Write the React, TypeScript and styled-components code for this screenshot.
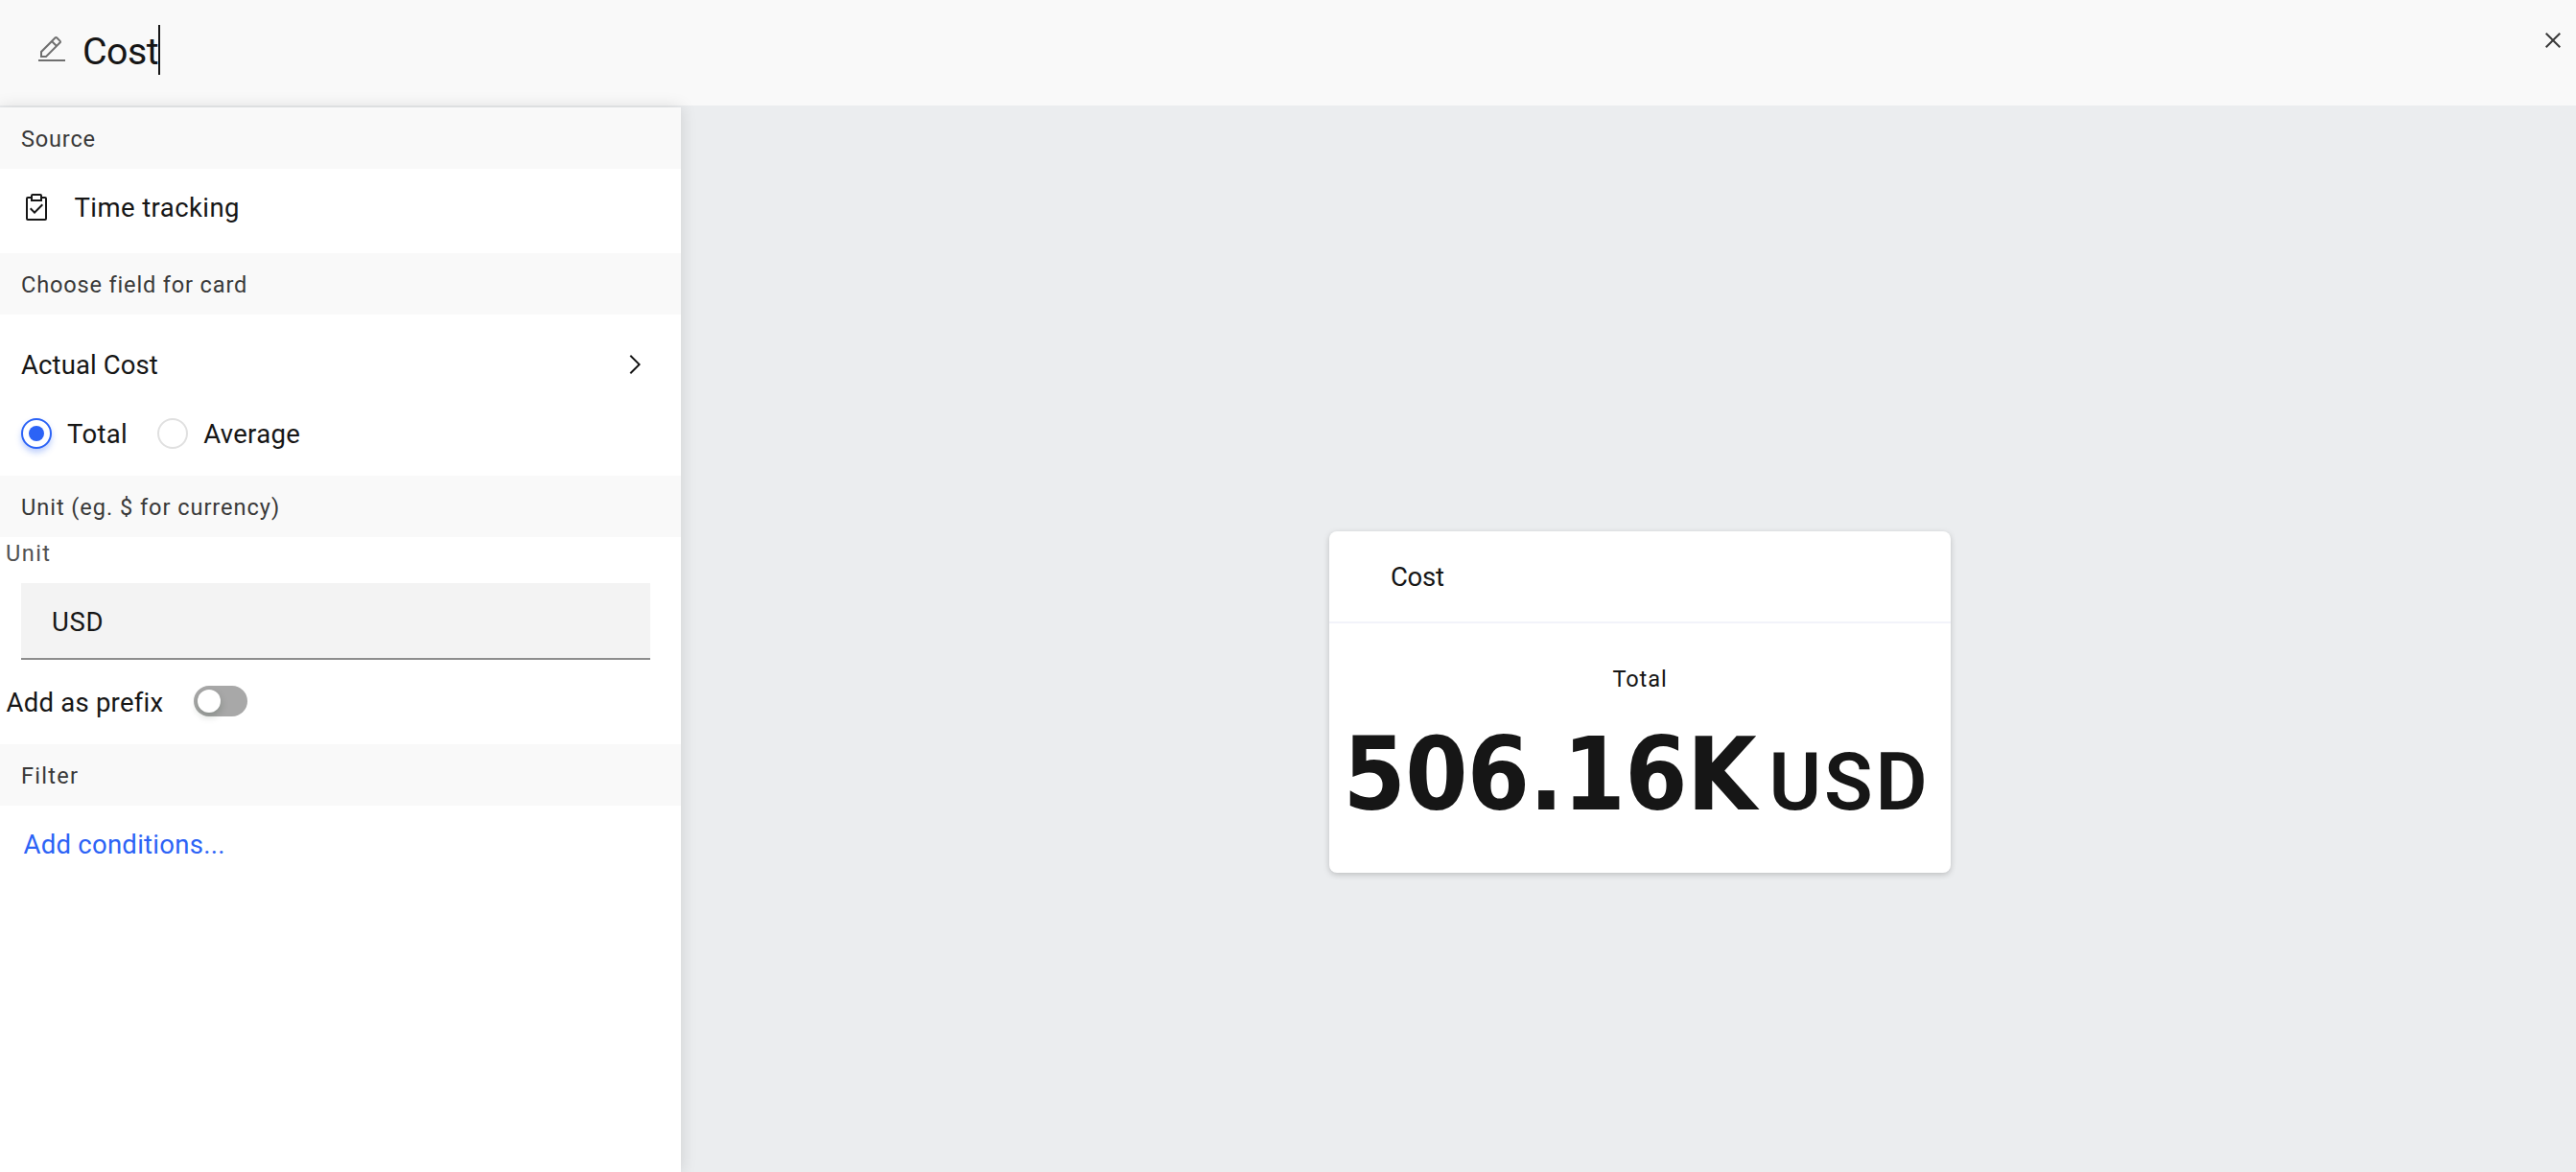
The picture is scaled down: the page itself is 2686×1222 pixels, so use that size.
import React from 'react';
import styled, { createGlobalStyle, css } from 'styled-components';

const color = {
  ink: '#161616',
  label: '#393939',
  helper: '#525252',
  accent: '#2c63f6',
  surface: '#f9f9f9',
  canvas: '#ebedef',
};

const GlobalStyle = createGlobalStyle`
  * { box-sizing: border-box; }
  body {
    margin: 0;
    background: ${color.canvas};
    color: ${color.ink};
    font-family: Roboto, "Liberation Sans", sans-serif;
    font-kerning: normal;
  }
`;

const Page = styled.div`
  display: flex;
  flex-direction: column;
  height: 1222px;
  overflow: hidden;
`;

const Header = styled.header`
  display: flex;
  flex: none;
  justify-content: space-between;
  height: 110px;
  padding: 26px 8px 0 38px;
  background: ${color.surface};
`;

const TitleField = styled.div`
  display: flex;
  align-items: flex-start;
  height: 52px;
`;

const Icon = styled.svg<{ $color?: string }>`
  display: block;
  flex: none;
  width: 32px;
  height: 32px;
  fill: ${(p) => p.$color ?? color.ink};
`;

const EditIcon = styled(Icon)`
  margin-top: 10px;
`;

const Title = styled.h1`
  margin: 1px 0 0 16px;
  font-size: 39.3px;
  font-weight: 400;
  line-height: 54px;
  letter-spacing: -0.5px;
`;

const Caret = styled.span`
  width: 2px;
  height: 52px;
  background: ${color.ink};
`;

const Main = styled.main`
  display: flex;
  flex: 1;
  min-height: 0;
`;

const Sidebar = styled.aside`
  display: flex;
  flex: none;
  flex-direction: column;
  width: 710px;
  margin-top: 2px;
  background: #fff;
  box-shadow: 0 0 16px rgba(0, 0, 0, 0.13);
`;

const SectionTitle = styled.h2<{ $spacing?: number }>`
  flex: none;
  height: 64px;
  margin: 0;
  padding: 1px 22px 0;
  background: ${color.surface};
  color: ${color.label};
  font-size: 23.6px;
  font-weight: 400;
  line-height: 64px;
  letter-spacing: ${(p) => p.$spacing ?? 0.82}px;
`;

const Text = styled.span<{ $spacing?: number }>`
  padding-top: 2px;
  font-size: 27.5px;
  line-height: 32px;
  letter-spacing: ${(p) => p.$spacing ?? 0.3}px;
  white-space: nowrap;
`;

const SourceRow = styled.div`
  display: flex;
  align-items: center;
  gap: 23.5px;
  height: 88px;
  padding: 0 22px 8px;
`;

const FieldSection = styled.div`
  display: flex;
  flex-direction: column;
  gap: 38px;
  padding: 35px 32px 27px 22px;
`;

const FieldRow = styled.div`
  display: flex;
  align-items: center;
  justify-content: space-between;
`;

const RadioGroup = styled.div`
  display: flex;
  gap: 31px;
`;

const RadioOption = styled.label`
  display: flex;
  align-items: center;
  gap: 16px;
`;

const RadioMark = styled.span<{ $checked?: boolean }>`
  display: flex;
  align-items: center;
  justify-content: center;
  width: 32px;
  height: 32px;
  border: 2px solid #e0e0e0;
  border-radius: 50%;
  background: #fff;
  ${(p) =>
    p.$checked &&
    css`
      border-color: ${color.accent};
      box-shadow: 0 4px 6px rgba(44, 99, 246, 0.3);
      &::after {
        content: '';
        width: 16px;
        height: 16px;
        border-radius: 50%;
        background: ${color.accent};
      }
    `}
`;

const UnitSection = styled.div`
  display: flex;
  flex-direction: column;
  height: 216px;
`;

const UnitLabel = styled.label`
  padding: 1px 0 0 6px;
  color: ${color.helper};
  font-size: 23.6px;
  line-height: 33px;
  letter-spacing: 1.4px;
`;

const UnitInput = styled.div`
  display: flex;
  align-items: center;
  height: 80px;
  margin: 14px 32px 26px 22px;
  padding: 1px 32px 0;
  border-bottom: 2px solid #8d8d8d;
  background: #f3f3f3;
`;

const PrefixRow = styled.div`
  display: flex;
  align-items: center;
  gap: 32px;
  padding-left: 6.5px;
`;

const PrefixText = styled(Text)`
  padding-top: 3px;
  line-height: 31px;
`;

const Toggle = styled.span`
  display: flex;
  align-items: center;
  width: 56px;
  height: 32px;
  padding: 0 4px;
  border-radius: 16px;
  background: #a8a8a8;
`;

const Knob = styled.span`
  width: 24px;
  height: 24px;
  border-radius: 50%;
  background: #fff;
  box-shadow: 0 4px 8px rgba(0, 35, 11, 0.2);
`;

const AddConditions = styled.a`
  padding: 24px 24.5px;
  color: ${color.accent};
  font-size: 27.5px;
  line-height: 33px;
  letter-spacing: 0.26px;
`;

const Preview = styled.section`
  display: flex;
  flex: 1;
  align-items: flex-start;
  justify-content: center;
  padding: 444px 0 0 24px;
`;

const Card = styled.article`
  width: 648px;
  height: 356px;
  border-radius: 8px;
  background: #fff;
  box-shadow: 0 2px 6px rgba(0, 0, 0, 0.2);
`;

const CardHeader = styled.div`
  display: flex;
  align-items: center;
  height: 96px;
  padding: 0 64px;
  border-bottom: 2px solid #f2f3fa;
`;

const Metric = styled.div`
  display: flex;
  flex-direction: column;
  align-items: center;
  padding-top: 42px;
`;

const MetricLabel = styled.span`
  font-size: 23.6px;
  line-height: 32px;
  letter-spacing: 0.9px;
`;

const MetricValue = styled.div`
  display: flex;
  align-items: baseline;
  align-self: flex-start;
  gap: 13.5px;
  margin-top: 28px;
  padding-left: 14.5px;
`;

const Amount = styled.span`
  font-family: "DejaVu Sans Condensed", "DejaVu Sans", sans-serif;
  font-size: 104.3px;
  font-stretch: condensed;
  font-weight: 700;
  line-height: 112px;
  letter-spacing: -0.6px;
`;

const Unit = styled.span`
  font-size: 83px;
  font-weight: 600;
  line-height: 96px;
  letter-spacing: 2.8px;
`;

export default function App() {
  return (
    <Page>
      <GlobalStyle />
      <Header>
        <TitleField>
          <EditIcon viewBox="0 0 32 32" $color="#6f6f6f">
            <path d="M2 26h28v2H2zM25.4 9c.8-.8.8-2 0-2.8l-3.6-3.6c-.8-.8-2-.8-2.8 0l-15 15V24h6.4l15-15zm-5-5L24 7.6l-3 3L17.4 7l3-3zM6 22v-3.6l10-10 3.6 3.6-10 10H6z" />
          </EditIcon>
          <Title>Cost</Title>
          <Caret />
        </TitleField>
        <Icon viewBox="0 0 32 32" $color={color.label}>
          <path d="M24 9.4 22.6 8 16 14.6 9.4 8 8 9.4l6.6 6.6L8 22.6 9.4 24l6.6-6.6 6.6 6.6 1.4-1.4-6.6-6.6L24 9.4z" />
        </Icon>
      </Header>
      <Main>
        <Sidebar>
          <SectionTitle $spacing={0.8}>Source</SectionTitle>
          <SourceRow>
            <Icon viewBox="0 0 32 32">
              <path d="M14 20.18 10.41 16.59 9 18l5 5 9-9-1.41-1.42L14 20.18z" />
              <path d="M25 5h-3V4a2 2 0 0 0-2-2h-8a2 2 0 0 0-2 2v1H7a2 2 0 0 0-2 2v21a2 2 0 0 0 2 2h18a2 2 0 0 0 2-2V7a2 2 0 0 0-2-2zM12 4h8v4h-8V4zm13 24H7V7h3v3h12V7h3v21z" />
            </Icon>
            <Text $spacing={0.41}>Time tracking</Text>
          </SourceRow>
          <SectionTitle>Choose field for card</SectionTitle>
          <FieldSection>
            <FieldRow>
              <Text $spacing={0.1}>Actual Cost</Text>
              <Icon viewBox="0 0 32 32">
                <path d="M22 16 12 26l-1.4-1.4 8.6-8.6-8.6-8.6L12 6l10 10z" />
              </Icon>
            </FieldRow>
            <RadioGroup>
              <RadioOption>
                <RadioMark $checked />
                <Text $spacing={0.35}>Total</Text>
              </RadioOption>
              <RadioOption>
                <RadioMark />
                <Text>Average</Text>
              </RadioOption>
            </RadioGroup>
          </FieldSection>
          <SectionTitle $spacing={0.94}>Unit (eg. $ for currency)</SectionTitle>
          <UnitSection>
            <UnitLabel>Unit</UnitLabel>
            <UnitInput>
              <Text $spacing={0.67}>USD</Text>
            </UnitInput>
            <PrefixRow>
              <PrefixText $spacing={0.24}>Add as prefix</PrefixText>
              <Toggle>
                <Knob />
              </Toggle>
            </PrefixRow>
          </UnitSection>
          <SectionTitle $spacing={1.25}>Filter</SectionTitle>
          <AddConditions>Add conditions...</AddConditions>
        </Sidebar>
        <Preview>
          <Card>
            <CardHeader>
              <Text $spacing={-0.3}>Cost</Text>
            </CardHeader>
            <Metric>
              <MetricLabel>Total</MetricLabel>
              <MetricValue>
                <Amount>506.16K</Amount>
                <Unit>USD</Unit>
              </MetricValue>
            </Metric>
          </Card>
        </Preview>
      </Main>
    </Page>
  );
}
